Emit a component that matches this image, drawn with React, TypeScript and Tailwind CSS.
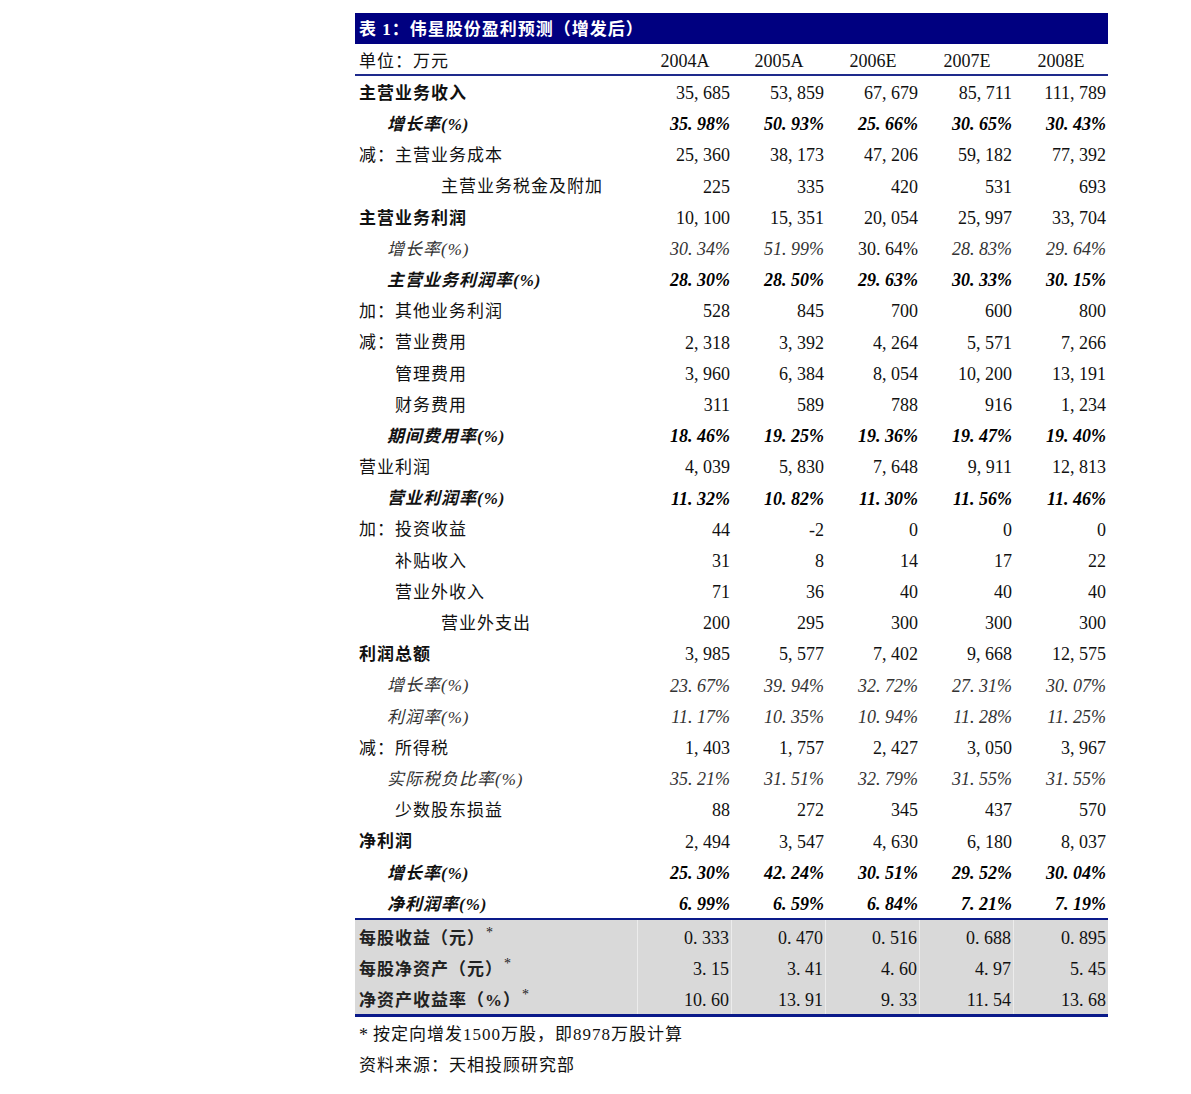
import React from "react";

type Style = "bold" | "bi" | "italic" | "normal";
type Row = { label: string; indent: number; style: Style; vals: string[]; upright?: number[] };

const rows: Row[] = [
  { label: "主营业务收入", indent: 0, style: "bold", vals: ["35, 685", "53, 859", "67, 679", "85, 711", "111, 789"] },
  { label: "增长率(%)", indent: 28, style: "bi", vals: ["35. 98%", "50. 93%", "25. 66%", "30. 65%", "30. 43%"] },
  { label: "减：主营业务成本", indent: 0, style: "normal", vals: ["25, 360", "38, 173", "47, 206", "59, 182", "77, 392"] },
  { label: "主营业务税金及附加", indent: 82, style: "normal", vals: ["225", "335", "420", "531", "693"] },
  { label: "主营业务利润", indent: 0, style: "bold", vals: ["10, 100", "15, 351", "20, 054", "25, 997", "33, 704"] },
  { label: "增长率(%)", indent: 28, style: "italic", vals: ["30. 34%", "51. 99%", "30. 64%", "28. 83%", "29. 64%"], upright: [2] },
  { label: "主营业务利润率(%)", indent: 28, style: "bi", vals: ["28. 30%", "28. 50%", "29. 63%", "30. 33%", "30. 15%"] },
  { label: "加：其他业务利润", indent: 0, style: "normal", vals: ["528", "845", "700", "600", "800"] },
  { label: "减：营业费用", indent: 0, style: "normal", vals: ["2, 318", "3, 392", "4, 264", "5, 571", "7, 266"] },
  { label: "管理费用", indent: 36, style: "normal", vals: ["3, 960", "6, 384", "8, 054", "10, 200", "13, 191"] },
  { label: "财务费用", indent: 36, style: "normal", vals: ["311", "589", "788", "916", "1, 234"] },
  { label: "期间费用率(%)", indent: 28, style: "bi", vals: ["18. 46%", "19. 25%", "19. 36%", "19. 47%", "19. 40%"] },
  { label: "营业利润", indent: 0, style: "normal", vals: ["4, 039", "5, 830", "7, 648", "9, 911", "12, 813"] },
  { label: "营业利润率(%)", indent: 28, style: "bi", vals: ["11. 32%", "10. 82%", "11. 30%", "11. 56%", "11. 46%"] },
  { label: "加：投资收益", indent: 0, style: "normal", vals: ["44", "-2", "0", "0", "0"] },
  { label: "补贴收入", indent: 36, style: "normal", vals: ["31", "8", "14", "17", "22"] },
  { label: "营业外收入", indent: 36, style: "normal", vals: ["71", "36", "40", "40", "40"] },
  { label: "营业外支出", indent: 82, style: "normal", vals: ["200", "295", "300", "300", "300"] },
  { label: "利润总额", indent: 0, style: "bold", vals: ["3, 985", "5, 577", "7, 402", "9, 668", "12, 575"] },
  { label: "增长率(%)", indent: 28, style: "italic", vals: ["23. 67%", "39. 94%", "32. 72%", "27. 31%", "30. 07%"] },
  { label: "利润率(%)", indent: 28, style: "italic", vals: ["11. 17%", "10. 35%", "10. 94%", "11. 28%", "11. 25%"] },
  { label: "减：所得税", indent: 0, style: "normal", vals: ["1, 403", "1, 757", "2, 427", "3, 050", "3, 967"] },
  { label: "实际税负比率(%)", indent: 28, style: "italic", vals: ["35. 21%", "31. 51%", "32. 79%", "31. 55%", "31. 55%"] },
  { label: "少数股东损益", indent: 36, style: "normal", vals: ["88", "272", "345", "437", "570"] },
  { label: "净利润", indent: 0, style: "bold", vals: ["2, 494", "3, 547", "4, 630", "6, 180", "8, 037"] },
  { label: "增长率(%)", indent: 28, style: "bi", vals: ["25. 30%", "42. 24%", "30. 51%", "29. 52%", "30. 04%"] },
  { label: "净利润率(%)", indent: 28, style: "bi", vals: ["6. 99%", "6. 59%", "6. 84%", "7. 21%", "7. 19%"] },
];

const grayRows = [
  { label: "每股收益（元）", vals: ["0. 333", "0. 470", "0. 516", "0. 688", "0. 895"] },
  { label: "每股净资产（元）", vals: ["3. 15", "3. 41", "4. 60", "4. 97", "5. 45"] },
  { label: "净资产收益率（%）", vals: ["10. 60", "13. 91", "9. 33", "11. 54", "13. 68"] },
];

const years = ["2004A", "2005A", "2006E", "2007E", "2008E"];

const FONT = "font-['Liberation_Serif','Noto_Sans_CJK_SC',serif]";

function labelCls(s: Style) {
  if (s === "bold") return "font-bold text-[#111]";
  if (s === "bi") return "font-bold italic text-[#111]";
  if (s === "italic") return "italic text-[#333]";
  return "font-normal text-[#111]";
}
function numCls(s: Style) {
  if (s === "bi") return "font-bold italic text-black";
  if (s === "italic") return "italic text-[#333]";
  return "font-normal text-[#111]";
}

export default function App() {
  return (
    <div className={`min-h-[1094px] w-[1191px] bg-white ${FONT}`}>
      <div className="ml-[355px] w-[753px] pt-[13px]">
        {/* Title bar */}
        <div className="flex h-[31px] items-center bg-[#000080] pl-[4px] pt-[3px] text-[17px] font-bold tracking-[1px] text-white">
          表 1：伟星股份盈利预测（增发后）
        </div>
        {/* Header */}
        <div className="grid h-[32px] grid-cols-[283px_repeat(5,94px)] items-center border-b-2 border-[#1e2a8c] pt-[4px] text-[#111]">
          <div className="pl-[4px] text-[17px] tracking-[1px]">单位：万元</div>
          {years.map((y) => (
            <div key={y} className="text-center text-[18px]">
              {y}
            </div>
          ))}
        </div>
        {/* Body rows */}
        <div>
          {rows.map((r, i) => (
            <div key={i} className="grid h-[31.2px] grid-cols-[283px_repeat(5,94px)] items-center pt-[4px]">
              <div className={`text-[17px] tracking-[1px] ${labelCls(r.style)}`} style={{ paddingLeft: 4 + r.indent }}>
                {r.label}
              </div>
              {r.vals.map((v, j) => (
                <div
                  key={j}
                  className={`pr-[2px] text-right text-[18px] ${r.upright && r.upright.includes(j) ? "font-normal text-[#111]" : numCls(r.style)}`}
                >
                  {v}
                </div>
              ))}
            </div>
          ))}
        </div>
        {/* Gray section */}
        <div className="border-t-2 border-b-[3px] border-[#0a1a8a] bg-[#d9d9d9]">
          {grayRows.map((r, i) => (
            <div key={i} className="grid h-[31.2px] grid-cols-[283px_repeat(5,94px)] items-stretch">
              <div className="flex items-center border-r border-[#ececec] pl-[4px] pt-[5px] text-[17px] font-bold tracking-[1px] text-[#222]">
                {r.label}
                <span className="-mt-[12px] ml-[1px] text-[14px] font-normal">*</span>
              </div>
              {r.vals.map((v, j) => (
                <div
                  key={j}
                  className={`flex items-center justify-end pr-[2px] pt-[5px] text-[18px] text-[#111] ${j < 4 ? "border-r border-[#ececec]" : ""}`}
                >
                  {v}
                </div>
              ))}
            </div>
          ))}
        </div>
        {/* Footnotes */}
        <div className="flex h-[31px] items-center pl-[4px] pt-[6px] text-[17px] tracking-[1px] text-[#111]">
          <span className="mr-[4px] text-[18px]">*</span>按定向增发1500万股，即8978万股计算
        </div>
        <div className="flex h-[31px] items-center pl-[4px] pt-[6px] text-[17px] tracking-[1px] text-[#111]">
          资料来源：天相投顾研究部
        </div>
      </div>
    </div>
  );
}
